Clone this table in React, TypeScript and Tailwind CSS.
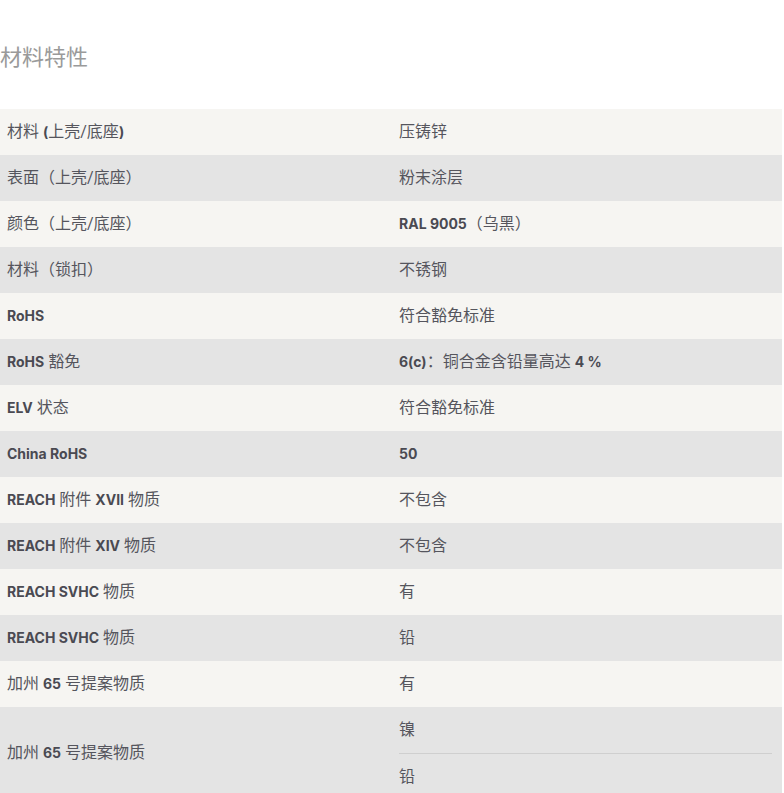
import React from "react";

const B = ({ children }: { children: React.ReactNode }) => (
  <span
    className="font-bold text-[14px] text-[#4a4a52]"
    style={{ fontFamily: 'Inter, "Noto Sans CJK SC", sans-serif' }}
  >
    {children}
  </span>
);

type Row = { label: React.ReactNode; values: React.ReactNode[] };

const rows: Row[] = [
  { label: <>材料 <B>(</B>上壳/底座<B>)</B></>, values: ["压铸锌"] },
  { label: "表面（上壳/底座）", values: ["粉末涂层"] },
  { label: "颜色（上壳/底座）", values: [<><B>RAL 9005</B>（乌黑）</>] },
  { label: "材料（锁扣）", values: ["不锈钢"] },
  { label: <B>RoHS</B>, values: ["符合豁免标准"] },
  { label: <><B>RoHS</B> 豁免</>, values: [<><B>6(c)</B>：铜合金含铅量高达 <B>4 %</B></>] },
  { label: <><B>ELV</B> 状态</>, values: ["符合豁免标准"] },
  { label: <B>China RoHS</B>, values: [<B>50</B>] },
  { label: <><B>REACH</B> 附件 <B>XVII</B> 物质</>, values: ["不包含"] },
  { label: <><B>REACH</B> 附件 <B>XIV</B> 物质</>, values: ["不包含"] },
  { label: <><B>REACH SVHC</B> 物质</>, values: ["有"] },
  { label: <><B>REACH SVHC</B> 物质</>, values: ["铅"] },
  { label: <>加州 <B>65</B> 号提案物质</>, values: ["有"] },
  { label: <>加州 <B>65</B> 号提案物质</>, values: ["镍", "铅"] },
];

export default function App() {
  return (
    <div
      className="w-[784px] min-h-[793px] bg-white text-[#55555d]"
      style={{ fontFamily: 'Roboto, "Noto Sans CJK SC", sans-serif' }}
    >
      <div className="pt-[43px] pb-[36px]">
        <h2 className="text-[22px] leading-[30px] font-normal text-[#9a9a9a]">材料特性</h2>
      </div>
      <div className="w-[782px]">
        {rows.map((r, i) => (
          <div
            key={i}
            className={`grid grid-cols-2 text-[16px] ${i % 2 === 0 ? "bg-[#f6f5f2]" : "bg-[#e4e4e4]"}`}
          >
            <div className="flex items-center pl-[7px] min-h-[46px]">
              <span>{r.label}</span>
            </div>
            <div className="flex flex-col pl-[8px] pr-[10px]">
              {r.values.map((v, j) => (
                <div
                  key={j}
                  className={`flex items-center h-[46px] ${j > 0 ? "border-t border-[#cfcfcf]" : ""}`}
                >
                  <span>{v}</span>
                </div>
              ))}
            </div>
          </div>
        ))}
      </div>
    </div>
  );
}
